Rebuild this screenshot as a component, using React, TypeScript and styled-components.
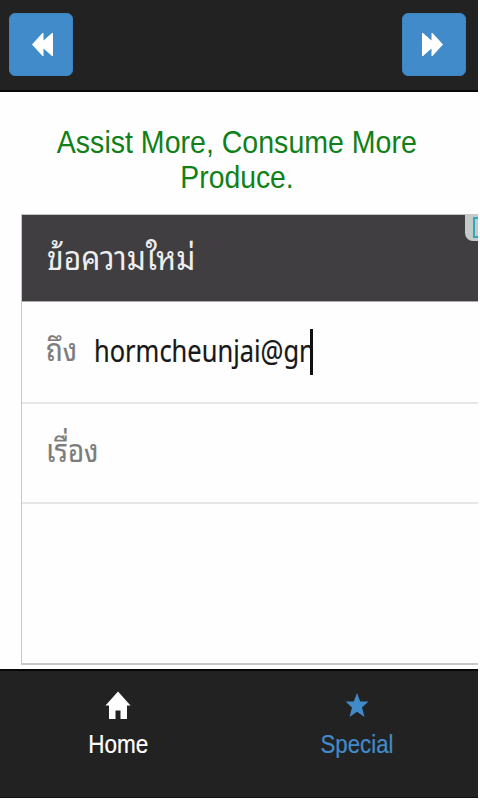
import React from "react";
import styled, { createGlobalStyle } from "styled-components";

const GlobalStyle = createGlobalStyle`
  * { box-sizing: border-box; }
  body { margin: 0; background: #fdfdfd; }
`;

const Screen = styled.div`
  width: 480px;
  height: 800px;
  padding: 0 2px 3px 0;
  display: flex;
  flex-direction: column;
  overflow: hidden;
  background: #fefefe;
  font-family: "Liberation Sans", sans-serif;
`;

const TopBar = styled.header`
  height: 92px;
  flex: none;
  padding: 13px 12px 0 9px;
  display: flex;
  justify-content: space-between;
  align-items: flex-start;
  background: #222;
  border-bottom: 2px solid #080808;
`;

const NavButton = styled.button`
  width: 64px;
  height: 63px;
  padding: 0 0 0 3px;
  display: flex;
  align-items: center;
  justify-content: center;
  border: 1px solid #3c84c2;
  border-radius: 6px;
  background: #428bca;
`;

const NextButton = styled(NavButton)`
  padding: 0 4px 0 0;
`;

const Title = styled.h1`
  height: 122px;
  flex: none;
  margin: 0;
  padding: 33px 4px 0 0;
  display: flex;
  flex-direction: column;
  align-items: center;
  color: #108018;
  font-size: 32px;
  font-weight: 400;
  line-height: 35px;
`;

const Condensed = styled.span<{ $scale: number; $origin?: string }>`
  display: inline-block;
  white-space: nowrap;
  transform: scaleX(${(p) => p.$scale});
  transform-origin: ${(p) => p.$origin ?? "center"};
`;

const Message = styled.section`
  height: 451px;
  flex: none;
  margin-left: 21px;
  display: flex;
  flex-direction: column;
  border: 1px solid #c8c8ca;
  border-right: 0;
  border-bottom-width: 2px;
  font-family: "Noto Sans Thai Looped", Loma, Garuda, Waree, "Tlwg Typo", Norasi, FreeSerif, Kinnari, "Noto Serif Thai", serif;
`;

const MessageHeader = styled.div`
  height: 87px;
  flex: none;
  padding: 0 0 5px 25px;
  display: flex;
  align-items: center;
  position: relative;
  background: #403e41;
  border-bottom: 1px solid #aaa;
  color: #eee;
  font-size: 33px;
`;

const AdCorner = styled.div`
  position: absolute;
  top: 0;
  right: 0;
  width: 13px;
  height: 26px;
  padding: 2px 0 0 8px;
  border-bottom-left-radius: 8px;
  background: #c4c9c9;
`;

const AdMark = styled.div`
  width: 5px;
  height: 21px;
  border: 2px solid #2caab8;
  border-right: 0;
`;

const Field = styled.div<{ $height: number }>`
  height: ${(p) => p.$height}px;
  flex: none;
  padding-left: 24px;
  display: flex;
  align-items: center;
  border-bottom: 2px solid #e6e6e9;
`;

const Label = styled.span<{ $width: number }>`
  width: ${(p) => p.$width}px;
  padding-bottom: 11px;
  color: #7c7c7c;
  font-size: 32px;
  -webkit-text-stroke: 0.2px #7c7c7c;
`;

const Address = styled.div`
  position: relative;
  width: 219px;
  height: 46px;
  color: #181818;
  font-family: "Noto Sans", sans-serif;
  font-size: 30px;
  line-height: 43px;
  -webkit-text-stroke: 0.2px #181818;
`;

const Caret = styled.i`
  position: absolute;
  top: 0;
  right: 0;
  width: 3px;
  height: 46px;
  background: #111;
`;

const TabBar = styled.nav`
  height: 129px;
  flex: none;
  margin-top: 4px;
  display: grid;
  grid-template-columns: 1fr 1fr;
  background: #222;
  border-top: 2px solid #080808;
  border-bottom: 1px solid #111;
`;

const Tab = styled.a<{ $color: string }>`
  padding: 19px 3px 0 0;
  display: flex;
  flex-direction: column;
  align-items: center;
  color: ${(p) => p.$color};
  font-size: 25px;
  line-height: 30px;
  -webkit-text-stroke: 0.2px ${(p) => p.$color};
`;

const TabIcon = styled.svg`
  width: 28px;
  height: 30px;
  margin-bottom: 9px;
  fill: currentColor;
  stroke: none;
`;

const Arrows = styled.svg`
  width: 24px;
  height: 26px;
  fill: #fff;
`;

export default function App() {
  return (
    <>
      <GlobalStyle />
      <Screen>
        <TopBar>
          <NavButton aria-label="Previous">
            <Arrows viewBox="0 0 24 26"><path d="M1 12.500 11.500 1H12.500V8.500L21 1H22V24H21L12.500 16.500V24H11.500Z" /></Arrows>
          </NavButton>
          <NextButton aria-label="Next">
            <Arrows viewBox="0 0 24 26"><path d="M23 12.500 12.500 1H11.500V8.500L3 1H2V24H3L11.500 16.500V24H12.500Z" /></Arrows>
          </NextButton>
        </TopBar>
        <Title>
          <Condensed $scale={0.892}>Assist More, Consume More</Condensed>
          <Condensed $scale={0.885}>Produce.</Condensed>
        </Title>
        <Message>
          <MessageHeader>
            <Condensed $scale={0.91} $origin="left">ข้อความใหม่</Condensed>
            <AdCorner><AdMark /></AdCorner>
          </MessageHeader>
          <Field $height={102}>
            <Label $width={48}><Condensed $scale={0.86} $origin="left">ถึง</Condensed></Label>
            <Address>
              <Condensed $scale={0.848} $origin="left">hormcheunjai@gn</Condensed>
              <Caret />
            </Address>
          </Field>
          <Field $height={100}>
            <Label $width={100}><Condensed $scale={0.865} $origin="left">เรื่อง</Condensed></Label>
          </Field>
        </Message>
        <TabBar>
          <Tab $color="#fff">
            <TabIcon viewBox="0 0 28 30"><path d="M14 1.500 1.500 15.500H5V29H11.500V20.500H16.500V29H23V15.500H26.500Z" /></TabIcon>
            <Condensed $scale={0.9}>Home</Condensed>
          </Tab>
          <Tab $color="#428bca">
            <TabIcon viewBox="0 0 28 30"><path d="M14 3 17.200 11.500H25.500L19 17.500 21.500 27 14 21.800 6.500 27 9 17.500 2.500 11.500H10.800Z" /></TabIcon>
            <Condensed $scale={0.89}>Special</Condensed>
          </Tab>
        </TabBar>
      </Screen>
    </>
  );
}
